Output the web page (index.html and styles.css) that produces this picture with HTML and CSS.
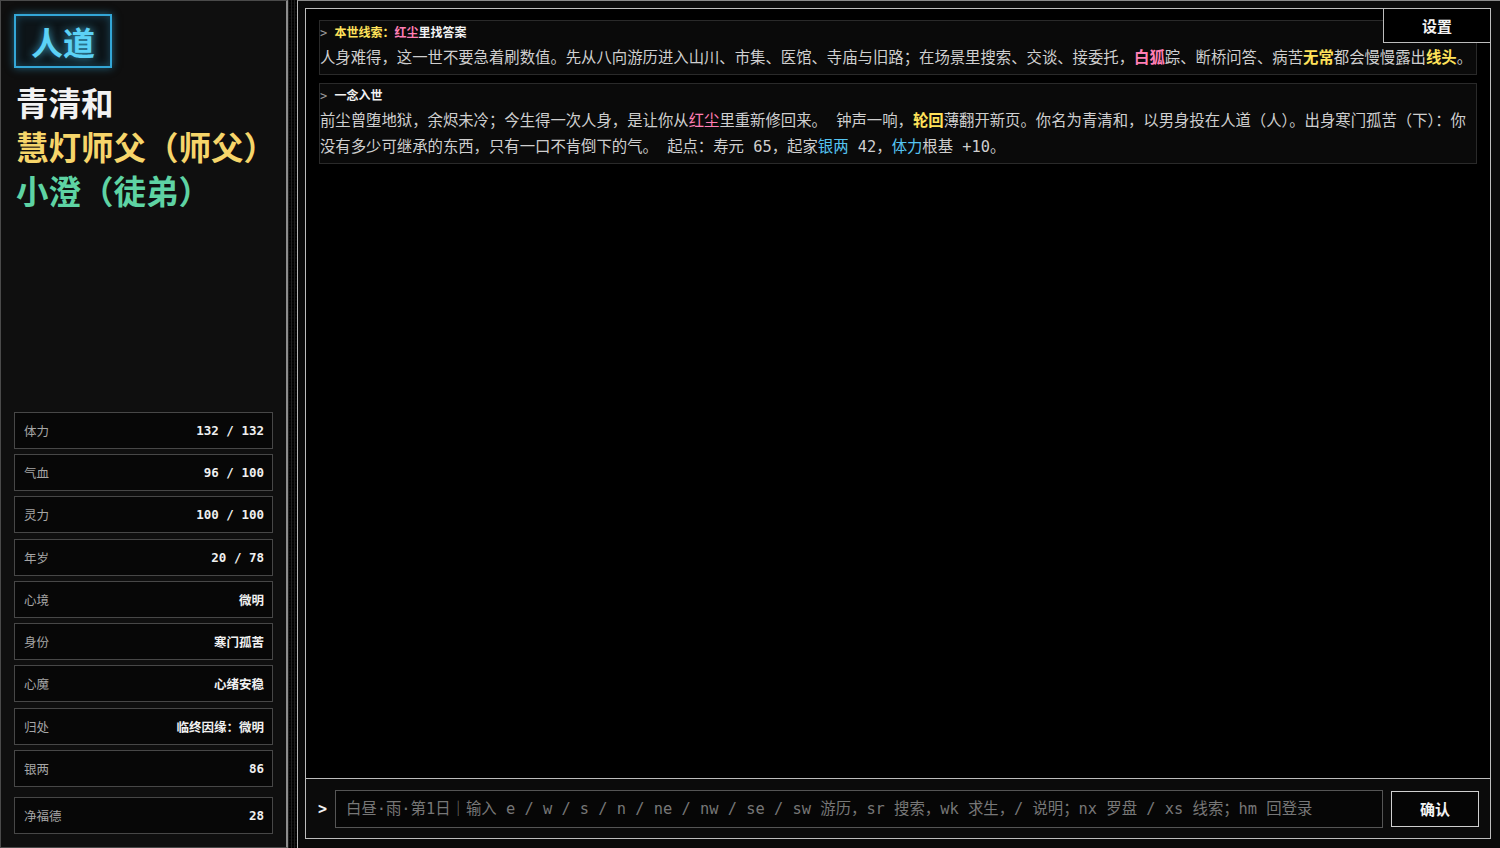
FILE: index.html
```html
<!DOCTYPE html>
<html lang="zh-CN">
<head>
    <meta charset="UTF-8">
    <meta name="viewport" content="width=device-width, initial-scale=1.0">
    <title>人道</title>
    <link rel="stylesheet" href="styles.css">
</head>
<body>

<div class="app">
    <!-- 左侧：角色信息 -->
    <aside class="side">
        <div class="realm">人道</div>

        <div class="names">
            <div class="name self">青清和</div>
            <div class="name master">慧灯师父（师父）</div>
            <div class="name disciple">小澄（徒弟）</div>
        </div>

        <div class="stats">
            <div class="stat"><span class="stat-label">体力</span><span class="stat-value">132 / 132</span></div>
            <div class="stat"><span class="stat-label">气血</span><span class="stat-value">96 / 100</span></div>
            <div class="stat"><span class="stat-label">灵力</span><span class="stat-value">100 / 100</span></div>
            <div class="stat"><span class="stat-label">年岁</span><span class="stat-value">20 / 78</span></div>
            <div class="stat"><span class="stat-label">心境</span><span class="stat-value">微明</span></div>
            <div class="stat"><span class="stat-label">身份</span><span class="stat-value">寒门孤苦</span></div>
            <div class="stat"><span class="stat-label">心魔</span><span class="stat-value">心绪安稳</span></div>
            <div class="stat"><span class="stat-label">归处</span><span class="stat-value">临终因缘：微明</span></div>
            <div class="stat"><span class="stat-label">银两</span><span class="stat-value">86</span></div>
            <div class="stat merit"><span class="stat-label">净福德</span><span class="stat-value">28</span></div>
        </div>
    </aside>

    <div class="gutter"></div>

    <!-- 右侧：日志与输入 -->
    <main class="main">
        <div class="console">
            <button class="settings">设置</button>

            <div class="log">
                <div class="entry">
                    <div class="entry-title"><span class="caret">&gt;</span> <span class="hl-yellow">本世线索：</span><span class="hl-pink">红尘</span>里找答案</div>
                    <div class="entry-body">人身难得，这一世不要急着刷数值。先从八向游历进入山川、市集、医馆、寺庙与旧路；在场景里搜索、交谈、接委托，<b class="hl-pink">白狐</b>踪、断桥问答、病苦<b class="hl-yellow">无常</b>都会慢慢露出<b class="hl-yellow">线头</b>。</div>
                </div>

                <div class="entry">
                    <div class="entry-title"><span class="caret">&gt;</span> 一念入世</div>
                    <div class="entry-body">前尘曾堕地狱，余烬未冷；今生得一次人身，是让你从<span class="hl-pink">红尘</span>里重新修回来。 钟声一响，<b class="hl-yellow">轮回</b>薄翻开新页。你名为青清和，以男身投在人道（人）。出身寒门孤苦（下）：你没有多少可继承的东西，只有一口不肯倒下的气。 起点：寿元 65，起家<span class="hl-blue">银两</span> 42，<span class="hl-blue">体力</span>根基 +10。</div>
                </div>
            </div>

            <div class="bar">
                <span class="prompt">&gt;</span>
                <input class="command" type="text" placeholder="白昼·雨·第1日｜输入 e / w / s / n / ne / nw / se / sw 游历，sr 搜索，wk 求生，/ 说明；nx 罗盘 / xs 线索；hm 回登录">
                <button class="confirm">确认</button>
            </div>
        </div>
    </main>
</div>

</body>
</html>
```

FILE: styles.css
```css
/* 全局 */
* {
    margin: 0;
    padding: 0;
    box-sizing: border-box;
}

html, body {
    height: 100%;
    overflow: hidden;
}

body {
    background-color: #000;
    color: #d0d0d0;
    font-family: 'DejaVu Sans Mono', 'Noto Sans CJK SC', monospace;
}

.app {
    display: flex;
    height: 100vh;
}

/* 左侧面板 */
.side {
    width: 288px;
    flex-shrink: 0;
    display: flex;
    flex-direction: column;
    padding: 13px;
    background-color: #0f0f0f;
    border: 1px solid #4a4a4a;
    border-right: 2px solid #8c8c8c;
    font-family: 'Noto Sans CJK SC', sans-serif;
}

.realm {
    align-self: flex-start;
    padding: 0 15px;
    font-size: 32px;
    font-weight: 700;
    line-height: 50px;
    color: #5cd2f6;
    border: 2px solid #33a6d6;
    background-color: #0d1418;
    text-shadow: 0 0 8px rgba(70, 200, 245, 0.8);
    box-shadow: 0 0 8px rgba(51, 166, 214, 0.55), inset 0 0 8px rgba(51, 166, 214, 0.35);
}

.names {
    margin-top: 12px;
    padding-left: 2px;
}

.name {
    font-size: 32.5px;
    font-weight: 700;
    line-height: 44px;
    white-space: nowrap;
}

.self { color: #f2f2f2; }
.master { color: #f6d56a; }
.disciple { color: #5ed3a3; }

.stats {
    margin-top: auto;
    display: flex;
    flex-direction: column;
    gap: 5.25px;
}

.stat {
    height: 37px;
    display: flex;
    align-items: center;
    justify-content: space-between;
    padding: 0 8px 0 9px;
    background-color: #070707;
    border: 1px solid #474747;
    font-size: 12.5px;
}

.stat.merit {
    margin-top: 5px;
}

.stat-label {
    color: #a6a6a6;
}

.stat-value {
    color: #f0f0f0;
    font-weight: 700;
    font-family: 'DejaVu Sans Mono', 'Noto Sans CJK SC', monospace;
}

/* 中间的拖动条 */
.gutter {
    width: 9px;
    flex-shrink: 0;
    background-color: #060606;
    background-image: repeating-linear-gradient(90deg, #1e1e1e 0 1px, transparent 1px 3px),
                      repeating-linear-gradient(0deg, #000 0 1px, transparent 1px 3px);
}

/* 右侧主区 */
.main {
    flex: 1;
    display: flex;
    padding: 7px 9px 9px 7px;
    background-color: #0a0a0a;
    border-left: 1px solid #b4b4b4;
    border-top: 1px solid #8a8a8a;
}

.console {
    position: relative;
    flex: 1;
    display: flex;
    flex-direction: column;
    border: 1px solid #bdbdbd;
    background-color: #000;
}

.settings {
    position: absolute;
    top: -1px;
    right: -1px;
    width: 108px;
    height: 35px;
    padding-bottom: 1px;
    background-color: #000;
    border: 1px solid #bdbdbd;
    color: #f2f2f2;
    font-family: 'Noto Sans CJK SC', sans-serif;
    font-size: 15px;
    font-weight: 700;
    cursor: pointer;
}

.log {
    flex: 1;
    padding: 11px 13px 10px;
    display: flex;
    flex-direction: column;
    gap: 8px;
}

.entry {
    padding: 4px 2px 3px 0;
    background-color: #0a0a0a;
    border: 1px solid #2a2a2a;
}

.entry-title {
    font-size: 12px;
    font-weight: 700;
    line-height: 17px;
    color: #f2f2f2;
    margin-bottom: 3px;
}

.caret {
    color: #9a9a9a;
    font-weight: 400;
}

.entry-body {
    font-size: 15.36px;
    line-height: 26px;
    color: #cfcfcf;
}

.hl-yellow { color: #ffe25a; }
.hl-pink { color: #ff7fb4; }
.hl-blue { color: #55c4f2; }

b {
    font-weight: 700;
}

/* 输入栏 */
.bar {
    height: 60px;
    display: flex;
    align-items: center;
    gap: 8px;
    padding: 0 11px 0 12px;
    border-top: 1px solid #bdbdbd;
    background-color: #0b0b0b;
}

.prompt {
    color: #f2f2f2;
    font-weight: 700;
    font-size: 15px;
}

.command {
    flex: 1;
    height: 38px;
    padding: 0 10px;
    background-color: #060606;
    border: 1px solid #555;
    color: #ddd;
    font-family: 'DejaVu Sans Mono', 'Noto Sans CJK SC', monospace;
    font-size: 15.36px;
    outline: none;
}

.command::placeholder {
    color: #777;
}

.confirm {
    width: 88px;
    height: 36px;
    background-color: #050505;
    border: 1px solid #cfcfcf;
    color: #f2f2f2;
    font-family: 'Noto Sans CJK SC', sans-serif;
    font-size: 15px;
    font-weight: 700;
    cursor: pointer;
}
```
